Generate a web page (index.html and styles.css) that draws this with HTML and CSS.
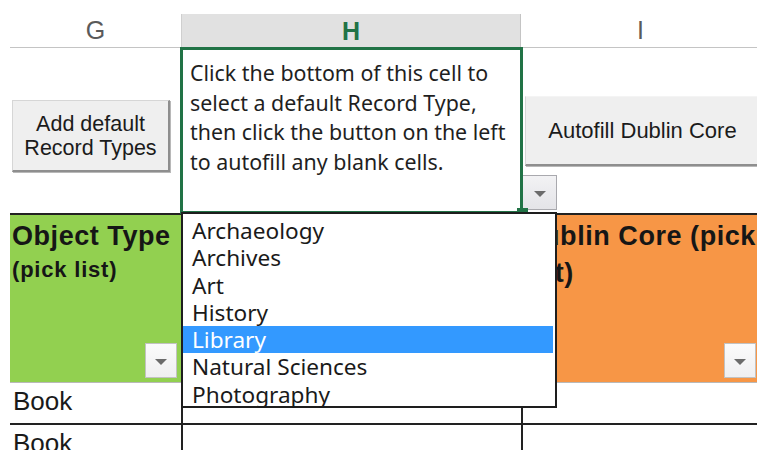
FILE: index.html
```html
<!DOCTYPE html>
<html lang="en">
<head>
<meta charset="utf-8">
<title>Record Types</title>
<link rel="stylesheet" href="styles.css">
</head>
<body>
<div class="sheet">
  <div class="grid">
    <!-- column letters -->
    <div class="colhead">G</div>
    <div class="colhead active">H</div>
    <div class="colhead">I</div>

    <!-- control row -->
    <div class="cell ctl ctl-g">
      <button class="xl-btn btn-add" type="button">Add default<br>Record Types</button>
    </div>
    <div class="cell ctl ctl-h selected">
      <p class="hint">Click the bottom of this cell to select a default Record Type, then click the button on the left to autofill any blank cells.</p>
      <span class="fill-handle"></span>
      <span class="dd-arrow"><span class="tri"></span></span>
      <ul class="picklist">
        <li>Archaeology</li>
        <li>Archives</li>
        <li>Art</li>
        <li>History</li>
        <li class="hl">Library</li>
        <li>Natural Sciences</li>
        <li>Photography</li>
      </ul>
    </div>
    <div class="cell ctl ctl-i">
      <button class="xl-btn btn-autofill" type="button">Autofill Dublin Core</button>
    </div>

    <!-- field headings -->
    <div class="cell field green">
      <div class="field-title">Object Type</div>
      <div class="field-sub">(pick list)</div>
      <span class="filter"><span class="tri"></span></span>
    </div>
    <div class="cell field plain"></div>
    <div class="cell field orange">
      <div class="field-title">Dublin Core (pick<br>list)</div>
      <span class="filter"><span class="tri"></span></span>
    </div>

    <!-- data rows -->
    <div class="cell data">Book</div>
    <div class="cell data mid"></div>
    <div class="cell data mid"></div>

    <div class="cell data">Book</div>
    <div class="cell data mid"></div>
    <div class="cell data mid"></div>
  </div>
</div>
</body>
</html>
```
FILE: styles.css
```css
* {
  box-sizing: border-box;
}

html, body {
  margin: 0;
  padding: 0;
  background: #ffffff;
  overflow: hidden;
  width: 757px;
  height: 450px;
}

.sheet {
  padding: 14px 0 0 10px;
  width: 757px;
  height: 450px;
  overflow: hidden;
}

.grid {
  display: grid;
  grid-template-columns: 171px 340px 239px;
  grid-template-rows: 34px 167px 168px 42px 42px;
}

/* column letters */
.colhead {
  display: flex;
  align-items: center;
  justify-content: center;
  font-family: "Liberation Sans", Arial, sans-serif;
  font-size: 25px;
  color: #5a5a5a;
  border-bottom: 1px solid #c4c4c4;
}

.colhead.active {
  background: #e1e1e1;
  color: #217346;
  font-weight: bold;
  border-bottom: none;
  box-shadow: inset 1px 0 0 #cfcfcf, inset -1px 0 0 #c4c4c4;
}

.cell {
  position: relative;
}

/* control row */
.ctl {
  border-bottom: 2px solid #222222;
}

.ctl-g {
  padding: 52px 0 0 2px;
}

.ctl-i {
  padding: 48px 0 0 4px;
}

.xl-btn {
  font-family: "Liberation Sans", Arial, sans-serif;
  color: #1b1b1b;
  background: #efefef;
  padding: 0;
  margin: 0;
  border: 1px solid #d6d6d6;
  border-right: 2px solid #8e8e8e;
  border-bottom: 2px solid #8e8e8e;
  box-shadow: 1px 1px 0 #b8b8b8;
  cursor: default;
}

.btn-add {
  width: 158px;
  height: 72px;
  font-size: 21.5px;
  line-height: 24px;
  text-align: center;
}

.btn-autofill {
  width: 236px;
  height: 70px;
  font-size: 22px;
  border-top-color: #f4f4f4;
  border-right: none;
  padding-right: 2px;
}

.ctl-h {
  padding: 10px 6px 0 9px;
}

/* green frame around the active cell */
.selected::after {
  content: "";
  position: absolute;
  left: -1px;
  top: -1px;
  right: -2px;
  bottom: -1px;
  border: 3px solid #217346;
  z-index: 3;
  pointer-events: none;
}

.hint {
  margin: 0;
  font-family: "Noto Sans", "Open Sans", sans-serif;
  font-size: 21.4px;
  line-height: 29.6px;
  color: #1f1f1f;
}

.fill-handle {
  position: absolute;
  right: -7px;
  bottom: 0;
  width: 11px;
  height: 5px;
  background: #217346;
  z-index: 4;
}

.dd-arrow {
  position: absolute;
  left: calc(100% + 1px);
  bottom: 3px;
  width: 35px;
  height: 35px;
  background: linear-gradient(#f2f2f4, #e4e4e8);
  border: 1px solid #a9a9ae;
  display: flex;
  align-items: center;
  justify-content: center;
  z-index: 3;
}

.tri {
  width: 0;
  height: 0;
  border-left: 6px solid transparent;
  border-right: 6px solid transparent;
  border-top: 6px solid #6b6b6b;
  margin-top: 3px;
}

/* drop-down list of record types */
.picklist {
  position: absolute;
  left: 0;
  top: calc(100% - 1px);
  width: 376px;
  height: 196px;
  margin: 0;
  padding: 3px 2px 0 0;
  list-style: none;
  background: #ffffff;
  border: 2px solid #1e1e1e;
  z-index: 5;
  font-family: "Noto Sans", "Open Sans", sans-serif;
  font-size: 22.6px;
  color: #1a1a1a;
}

.picklist li {
  height: 27.3px;
  line-height: 27.3px;
  padding-left: 9px;
  white-space: nowrap;
}

.picklist li.hl {
  background: #3399ff;
  color: #ffffff;
}

/* field headings */
.field {
  border-bottom: 1px solid #b9b9b9;
  padding: 3px 0 0 2px;
  font-family: "Liberation Sans", Arial, sans-serif;
  font-weight: bold;
  color: #161616;
}

.green {
  background: #92d050;
}

.orange {
  background: #f79646;
}

.plain {
  background: #ffffff;
}

.field-title {
  font-size: 27px;
  letter-spacing: 0.55px;
  line-height: 36px;
  white-space: nowrap;
}

.orange .field-title {
  line-height: 37px;
}

.field-sub {
  font-size: 22px;
  letter-spacing: 0.8px;
  line-height: 32px;
}

.filter {
  position: absolute;
  right: 4px;
  bottom: 4px;
  width: 32px;
  height: 35px;
  background: linear-gradient(#fbfbfb, #efeff1);
  border: 1px solid #c2c2c2;
  display: flex;
  align-items: center;
  justify-content: center;
}

/* data rows */
.data {
  border-bottom: 2px solid #222222;
  padding: 3px 0 0 3px;
  font-family: "Liberation Sans", Arial, sans-serif;
  font-size: 26px;
  line-height: 30px;
  color: #1a1a1a;
}

.data.mid {
  border-left: 2px solid #222222;
}
```
